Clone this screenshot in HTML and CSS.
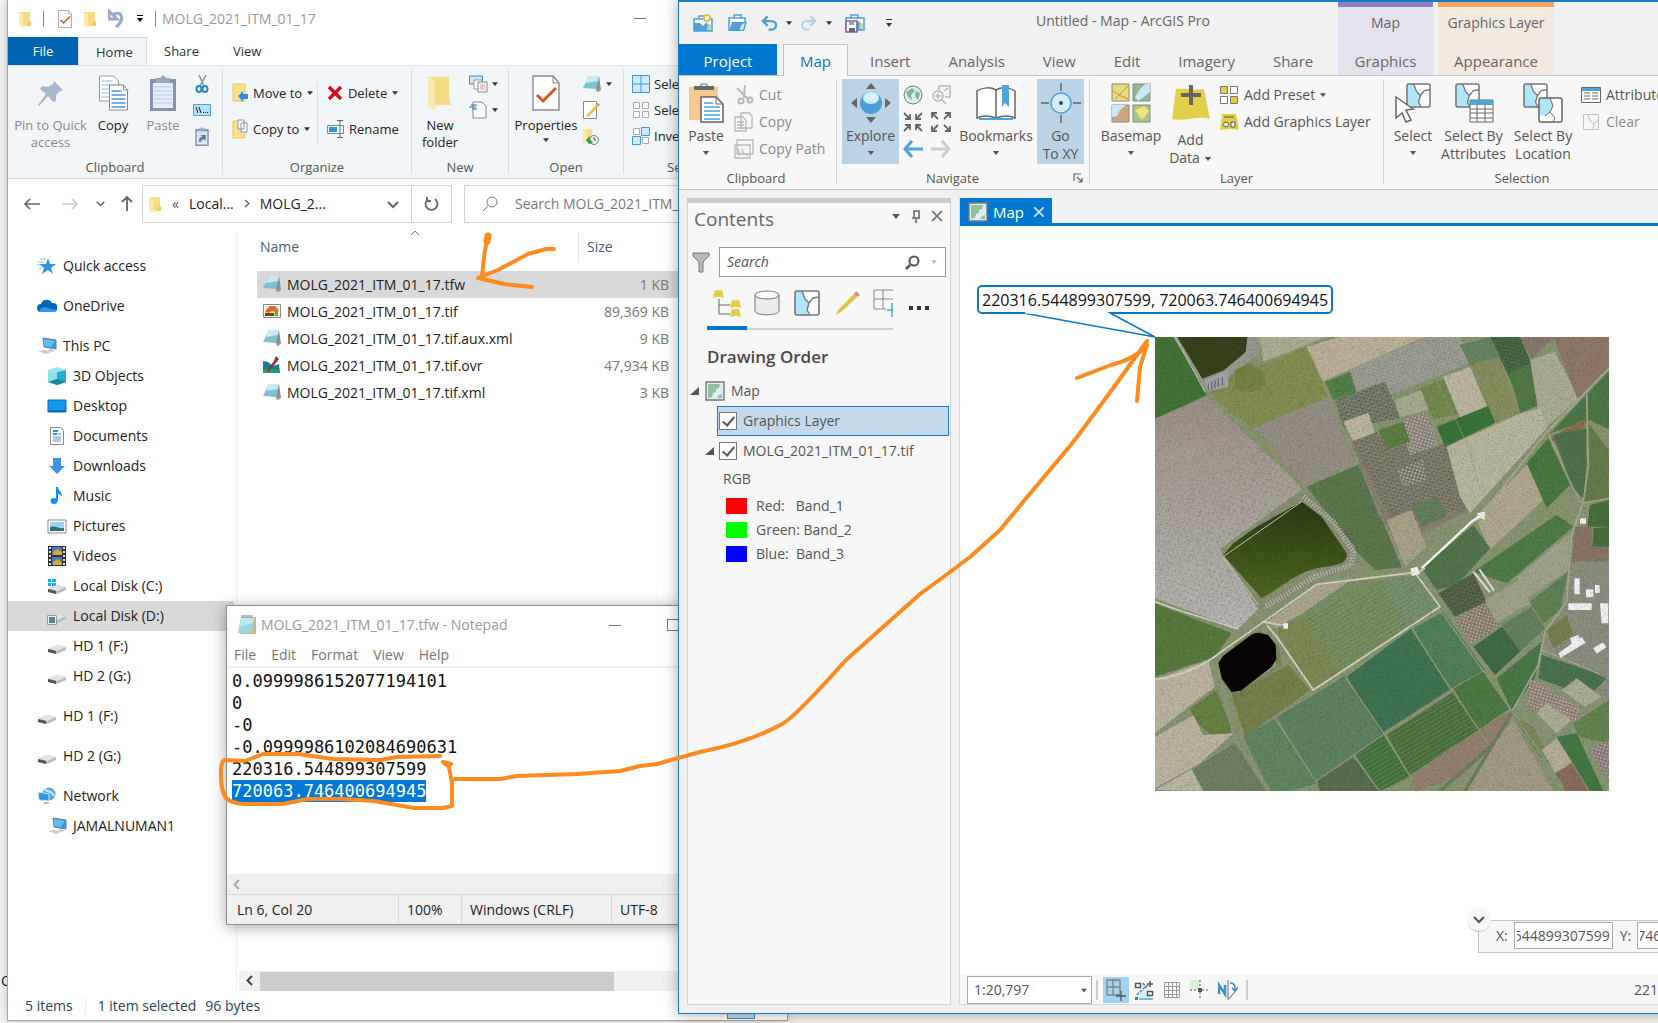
FILE: index.html
```
<!DOCTYPE html>
<html lang="en">
<head>
    <meta charset="UTF-8">
    <meta name="viewport" content="width=device-width, initial-scale=1.0">
    <title>World file coordinates</title>
    <link rel="stylesheet" href="styles.css">
</head>
<body>
    <!-- shared icons -->
    <svg class="defs" width="0" height="0">
        <symbol id="folder" viewBox="0 0 14 18"><path d="M1 2h11v13l-6 1H1z" fill="#f7dc84"/><path d="M10 11h3v5h-5z" fill="#f3cf68"/><path d="M1 2l4 2v14l-4-2z" fill="#fbe9ae"/></symbol>
        <symbol id="caret" viewBox="0 0 8 5"><path d="M0 0h8L4 5z" fill="currentColor"/></symbol>
        <symbol id="check-doc" viewBox="0 0 28 36"><path d="M1 1h20l6 7v27H1z" fill="#fff" stroke="#8a8a8a" stroke-width="1.4"/><path d="M21 1v7h6" fill="none" stroke="#8a8a8a"/><path d="M5 20l6 6L24 13" fill="none" stroke="#e0531f" stroke-width="3"/></symbol>
        <symbol id="note" viewBox="0 0 20 18"><path d="M7 1h10l-2 13-14-1z" fill="#7fc0d3"/><path d="M7 1h10l-1 5L4 8z" fill="#c9eaf1"/><path d="M17 1l2 14-3 2-2-3z" fill="#8b9494"/><path d="M14 15l4 0-3 2z" fill="#b79b62"/></symbol>
        <symbol id="pc" viewBox="0 0 20 18"><path d="M6 1l13 2v9L7 10z" fill="#2a9be8" stroke="#6d7f8c"/><path d="M7 2l11 2-4 6-7-1z" fill="#62bdf6"/><path d="M12 12l5 1-1 2-5-1zM1 14l6-1 7 2-5 2z" fill="#c4c9cd"/></symbol>
        <symbol id="drive" viewBox="0 0 20 12"><path d="M1 6l9-4 9 2v3l-9 4-9-2z" fill="#b9bbbd"/><path d="M1 5l9-3 9 2-9 4z" fill="#e2e3e4"/><path d="M1 6l8 2v3l-8-2z" fill="#525456"/></symbol>
        <symbol id="map-icon" viewBox="0 0 20 20"><path d="M1 1h18v18H1z" fill="#dcefF4" stroke="#777" stroke-width="1.4"/><path d="M3 3h12l-1 4-3 1 0 3-3 1-1 4-4 1zM14 14l3-1v4h-5z" fill="#94bf9c"/></symbol>
        <symbol id="poly" viewBox="0 0 26 26"><rect x="1" y="1" width="24" height="24" rx="2" fill="#fff"/><path d="M1 1h7l3 9 4 3-2 7 3 5H1z" fill="#b0e7f8"/><path d="M8 1l3 8 4 4-2 7 3 5M15 13l4-5 6-1" fill="none" stroke="#767676" stroke-width="1.4"/><rect x="1" y="1" width="24" height="24" rx="2" fill="none" stroke="#767676" stroke-width="1.6"/></symbol>
        <symbol id="globe-case" viewBox="0 0 20 18"><path d="M1 5h18v12H1z" fill="#fff" stroke="#4f9fd6" stroke-width="1.5"/><path d="M6 5V2h7v3" fill="none" stroke="#4f9fd6" stroke-width="1.5"/><path d="M1 17V9h6l3 3 4-4 3 9z" fill="#4f9fd6"/><path d="M15 9l3 2v5h-4z" fill="#b9dba9"/></symbol>
        <symbol id="open-case" viewBox="0 0 20 18"><path d="M1 17V4h16v4" fill="#fff" stroke="#4f9fd6" stroke-width="1.5"/><path d="M6 4V1h7v3" fill="none" stroke="#4f9fd6" stroke-width="1.5"/><path d="M4 8h15l-3 9H1z" fill="#4f9fd6"/><path d="M12 16c0-4 2-6 5-7l-2 7z" fill="#d5ebc9"/></symbol>
        <symbol id="undo" viewBox="0 0 18 16"><path d="M7 1L2 6l5 5M2 6h9c7 0 6 9 0 9H8" fill="none" stroke="currentColor" stroke-width="2.4"/></symbol>
        <symbol id="chev" viewBox="0 0 12 8"><path d="M1 1l5 5 5-5" fill="none" stroke="currentColor" stroke-width="2"/></symbol>
        <symbol id="pages" viewBox="0 0 30 36"><path d="M1 1h14l5 5v20H1z" fill="#fff" stroke="#999"/><path d="M3 6h11M3 10h14M3 14h14M3 18h14M3 22h14" stroke="#8bb8f0"/><path d="M11 10h14l4 5v20H11z" fill="#fff" stroke="#888"/><path d="M25 10v5h5" fill="none" stroke="#888"/><path d="M13 16h10M13 20h14M13 24h14M13 28h14M13 32h14" stroke="#4b91ee" stroke-width="1.3"/></symbol>
        <symbol id="clip" viewBox="0 0 26 36"><path d="M0 4h26v32H0z" fill="#8393b0"/><path d="M3 8h20v25H3z" fill="#e5ecf7"/><path d="M4 12h18M4 16h18M4 20h18M4 24h18M4 28h18" stroke="#b8c9e2"/><path d="M6 3h4l3-3 3 3h4v5H6z" fill="#9aa7b8"/></symbol>
        <symbol id="layer" viewBox="0 0 12 8"><path d="M2 0h8l2 8-6-1-6 1z" fill="#e2cd45"/></symbol>
    </svg>

    <main class="desktop">
        <p class="behind">C</p>

        <!-- file explorer -->
        <section class="explorer">
            <header class="ex-title">
                <svg width="14" height="18"><use href="#folder"/></svg>
                <span class="bar"></span>
                <svg width="14" height="18"><use href="#check-doc"/></svg>
                <svg width="14" height="18"><use href="#folder"/></svg>
                <svg width="17" height="20" viewBox="0 0 17 20"><path d="M1 2v8h8zM5 6c8-6 13 4 3 12" fill="none" stroke="#9aa9c7" stroke-width="3"/></svg>
                <svg width="8" height="8" viewBox="0 0 8 8"><path d="M1 0h6v1H1zM1 3h6L4 7z"/></svg>
                <span class="bar"></span>
                <h1>MOLG_2021_ITM_01_17</h1>
                <button class="min" aria-label="Minimize"></button>
            </header>
            <nav class="ex-tabs">
                <button class="file">File</button>
                <button class="active">Home</button>
                <button>Share</button>
                <button>View</button>
            </nav>
            <div class="ex-ribbon">
                <div class="group g-clip">
                    <div class="tools">
                        <button class="big dim pin"><svg width="27" height="36" viewBox="0 0 27 36"><path d="M17 6l9 9-3 1-4 4v6l-3 1-5-6-9 10-1-1 8-11-6-5 2-3 6 1 5-3z" fill="#a9b7cb"/></svg>Pin to Quick<br>access</button>
                        <button class="big copy"><svg width="31" height="36"><use href="#pages"/></svg>Copy</button>
                        <button class="big dim paste"><svg width="26" height="36"><use href="#clip"/></svg>Paste</button>
                        <div class="stack">
                            <button aria-label="Cut"><svg width="18" height="18" viewBox="0 0 18 18"><path d="M6 0l5 11M13 0L7 11" stroke="#8d949b" stroke-width="1.500"/><ellipse cx="6" cy="14" rx="2.500" ry="3" fill="none" stroke="#2089c9" stroke-width="2"/><ellipse cx="12" cy="14" rx="2.500" ry="3" fill="none" stroke="#2089c9" stroke-width="2"/></svg></button>
                            <button aria-label="Copy path"><svg width="18" height="12" viewBox="0 0 18 12"><path d="M.5.5h17v11H.5z" fill="#b5e1fb" stroke="#5a9fd4"/><path d="M3 3l2 6M6 3l2 6M10 8.500h1M12 8.500h1M14 8.500h1" stroke="#123"/></svg></button>
                            <button aria-label="Paste shortcut"><svg width="14" height="19" viewBox="0 0 26 36"><use href="#clip"/><path d="M7 28c0-7 3-9 7-10l-4-3h10v11l-3-3c-4 0-5 2-6 5z" fill="#5b76a5"/></svg></button>
                        </div>
                    </div>
                    <h2>Clipboard</h2>
                </div>
                <div class="group g-org">
                    <div class="tools">
                        <div class="rows">
                            <button><svg width="16" height="20" viewBox="0 0 16 20"><path d="M1 1h12v17H1z" fill="#fce08a" stroke="#e8c660"/><path d="M6 13l5-5v3h5v5h-5v3z" fill="#2c8fdd"/></svg>Move to<svg class="car" width="6" height="4"><use href="#caret"/></svg></button>
                            <button><svg width="16" height="20" viewBox="0 0 16 20"><path d="M1 2h12v17H1z" fill="#fce08a" stroke="#e8c660"/><path d="M6 1h6v9H6zM9 4h6v9H9z" fill="#fff" stroke="#8895aa"/></svg>Copy to<svg class="car" width="6" height="4"><use href="#caret"/></svg></button>
                        </div>
                        <div class="rows split">
                            <button><svg width="16" height="16" viewBox="0 0 16 16"><path d="M2 2l12 12M14 2L2 14" stroke="#cf1020" stroke-width="3.500"/></svg>Delete<svg class="car" width="6" height="4"><use href="#caret"/></svg></button>
                            <button><svg width="17" height="18" viewBox="0 0 17 18"><path d="M.5 5.500h16v8H.5z" fill="#fff" stroke="#7b8b9a"/><path d="M2 7h8v5H2z" fill="#2f91e4"/><path d="M10 .5h6M13 1v16M10 17.500h6" stroke="#666"/></svg>Rename</button>
                        </div>
                    </div>
                    <h2>Organize</h2>
                </div>
                <div class="group g-new">
                    <div class="tools">
                        <button class="big"><svg width="26" height="36"><path d="M1 2h21v19l2 9H8z" fill="#f6dc85"/><path d="M1 2l7 4v30l-7-5z" fill="#fbe9ad"/></svg>New<br>folder</button>
                        <div class="stack wide">
                            <button aria-label="New item"><svg width="19" height="18" viewBox="0 0 19 18"><path d="M.5 1h13v8H.5z" fill="#cfe4f5" stroke="#4d88b8"/><path d="M5 5h8v9H5z" fill="#fff" stroke="#999"/><path d="M9 7h9v10H9z" fill="#f7f7f7" stroke="#888"/><path d="M11 10h5M11 12h5M11 14h5" stroke="#d2a2a2"/></svg><svg class="car" width="6" height="4"><use href="#caret"/></svg></button>
                            <button aria-label="Easy access"><svg width="19" height="18" viewBox="0 0 19 18"><path d="M4 1h9l4 4v12H4z" fill="#fff" stroke="#888"/><path d="M2 4h6M0 6h7M3 8h5" stroke="#2d6db3"/></svg><svg class="car" width="6" height="4"><use href="#caret"/></svg></button>
                        </div>
                    </div>
                    <h2>New</h2>
                </div>
                <div class="group g-open">
                    <div class="tools">
                        <button class="big"><svg width="28" height="36"><use href="#check-doc"/></svg>Properties<svg class="car" width="6" height="4"><use href="#caret"/></svg></button>
                        <div class="stack wide">
                            <button aria-label="Open"><svg width="20" height="18"><use href="#note"/></svg><svg class="car" width="6" height="4"><use href="#caret"/></svg></button>
                            <button aria-label="Edit"><svg width="18" height="18" viewBox="0 0 18 18"><path d="M1.500.5h13v17h-13z" fill="#fff" stroke="#888"/><path d="M5 14L15 3l2 2L7 15l-3 1z" fill="#efb73e"/><path d="M15 3l1-1 2 2-1 1z" fill="#d56c6c"/></svg></button>
                            <button aria-label="History"><svg width="18" height="18" viewBox="0 0 18 18"><use href="#folder" width="12" height="17"/><circle cx="12" cy="13" r="4.500" fill="#e9eef0" stroke="#7d868c"/><path d="M12 10v3h2" fill="none" stroke="#555"/><path d="M4 13l4-4v3l3 4-4 1z" fill="#2ea043"/></svg></button>
                        </div>
                    </div>
                    <h2>Open</h2>
                </div>
                <div class="group g-sel">
                    <div class="tools">
                        <div class="stack lines">
                            <button><svg width="18" height="18" viewBox="0 0 18 18" fill="#cdeaff" stroke="#3c9be0"><path d="M.5.5h17v17H.5zM9 0v18M0 9h18"/></svg>Select all</button>
                            <button><svg width="18" height="18" viewBox="0 0 18 18" fill="#fff" stroke="#aaa"><path d="M1.500 1.500h6v6h-6zM10.500 1.500h6v6h-6zM1.500 10.500h6v6h-6zM10.500 10.500h6v6h-6z"/></svg>Select none</button>
                            <button><svg width="18" height="18" viewBox="0 0 18 18"><path d="M1.500 1.500h6v6h-6zM10.500 10.500h6v6h-6z" fill="#fff" stroke="#aaa"/><path d="M9.500.5h8v8h-8zM.5 9.500h8v8h-8z" fill="#cdeaff" stroke="#3c9be0"/></svg>Invert selection</button>
                        </div>
                    </div>
                    <h2>Select</h2>
                </div>
            </div>
            <div class="ex-nav">
                <button aria-label="Back"><svg width="16" height="12" viewBox="0 0 16 12"><path d="M6 1L1 6l5 5M1 6h15" fill="none" stroke="#666" stroke-width="1.600"/></svg></button>
                <button aria-label="Forward"><svg width="16" height="12" viewBox="0 0 16 12"><path d="M10 1l5 5-5 5M15 6H0" fill="none" stroke="#ccc" stroke-width="1.600"/></svg></button>
                <button class="recent" aria-label="Recent"><svg width="9" height="6"><use href="#chev"/></svg></button>
                <button class="up" aria-label="Up"><svg width="12" height="15" viewBox="0 0 12 15"><path d="M1 6l5-5 5 5M6 1v14" fill="none" stroke="#666" stroke-width="1.800"/></svg></button>
                <div class="address">
                    <svg width="14" height="18"><use href="#folder"/></svg>
                    <span class="sep">«</span>
                    <a href="#">Local...</a>
                    <svg class="sep" width="6" height="9" viewBox="0 0 6 9"><path d="M1 1l4 3.500-4 3.500" fill="none" stroke="#666" stroke-width="1.500"/></svg>
                    <a href="#">MOLG_2...</a>
                    <button class="drop" aria-label="Previous locations"><svg width="12" height="8"><use href="#chev"/></svg></button>
                    <button class="refresh" aria-label="Refresh"><svg width="15" height="16" viewBox="0 0 15 16"><path d="M4 3a6 6 0 1 0 7 0M3 1v4h4" fill="none" stroke="#666" stroke-width="1.800"/></svg></button>
                </div>
                <label class="ex-search">
                    <svg width="16" height="16" viewBox="0 0 16 16"><circle cx="10" cy="6" r="5" fill="none" stroke="#777"/><path d="M6 10l-5 5" stroke="#777"/></svg>
                    <input type="text" placeholder="Search MOLG_2021_ITM_01_17">
                </label>
            </div>
            <div class="ex-body">
                <ul class="sidebar">
                    <li class="top"><a href="#"><svg width="20" height="18" viewBox="0 0 20 18"><path d="M11 1l2 6h6l-5 4 2 6-5-4-6 4 2-6-5-4h7z" fill="#2b95e0"/><path d="M3 2h6M1 5h6M0 8h4M2 11h3" stroke="#8cc7f2"/></svg>Quick access</a></li>
                    <li class="top"><a href="#"><svg width="20" height="18" viewBox="0 0 20 18"><path d="M4 15a4 4 0 0 1 0-8 6 6 0 0 1 11-1 4 4 0 0 1 2 9z" fill="#0a64b8"/><path d="M3 15c-2-3 4-6 8-4l8 2c0 1-1 2-2 2z" fill="#2d9ae8"/></svg>OneDrive</a></li>
                    <li class="top"><a href="#"><svg width="20" height="18"><use href="#pc"/></svg>This PC</a></li>
                    <li><a href="#"><svg width="20" height="18" viewBox="0 0 20 18"><path d="M1 3l9-3 9 3-9 2z" fill="#9be6ee"/><path d="M1 3l9 2v13l-9-3z" fill="#8fe0e6"/><path d="M19 3l-9 2v13l9-3z" fill="#1fb0cb"/><path d="M10 12l9 3-9 3-9-3z" fill="#12899f"/></svg>3D Objects</a></li>
                    <li><a href="#"><svg width="20" height="18" viewBox="0 0 20 18"><path d="M1 3h18v12H1z" fill="#1497f0" stroke="#1466a8"/><path d="M2 14h16" stroke="#0a4f88"/></svg>Desktop</a></li>
                    <li><a href="#"><svg width="20" height="18" viewBox="0 0 20 18"><path d="M3.500.5h10l3 3v14h-13z" fill="#fff" stroke="#8a8a8a"/><path d="M6 4h5M6 7h4" stroke="#2b95d8" stroke-width="2"/><path d="M6 10h8M6 12h8M6 14h8M11 7h3" stroke="#5b95c4"/></svg>Documents</a></li>
                    <li><a href="#"><svg width="20" height="18" viewBox="0 0 20 18"><path d="M6 1h8v8h4l-8 8-8-8h4z" fill="#3f93de"/></svg>Downloads</a></li>
                    <li><a href="#"><svg width="20" height="18" viewBox="0 0 20 18"><ellipse cx="7" cy="14" rx="3.500" ry="3" fill="#1193ea"/><path d="M9 0h2c0 4 5 5 4 10-1-3-3-3-4-3v7H9z" fill="#1193ea"/></svg>Music</a></li>
                    <li><a href="#"><svg width="20" height="18" viewBox="0 0 20 18"><path d="M1 3h18v13H1z" fill="#fff" stroke="#8a8a8a"/><path d="M3 5h14v9H3z" fill="#9bd0f5"/><path d="M3 10c4-2 9 2 14 1v3H3z" fill="#2f6f73"/></svg>Pictures</a></li>
                    <li><a href="#"><svg width="20" height="20" viewBox="0 0 20 20"><path d="M1 0h18v20H1z" fill="#37302f"/><path d="M5 1h10v8H5zM5 11h10v8H5z" fill="#4a78d0"/><path d="M6 6l4-3 5 3v3H6zM6 16l5-3 4 4v2H6z" fill="#d8a92b"/><path d="M3 1v18M17 1v18" stroke="#ddd" stroke-width="2" stroke-dasharray="2 2"/></svg>Videos</a></li>
                    <li><a href="#"><svg width="20" height="18" viewBox="0 0 20 18"><path d="M1 2h3v3H1zM5 2h4v3H5zM1 6h3v3H1zM5 6h4v3H5z" fill="#16a9e0"/><use href="#drive" y="6" width="20" height="12"/></svg>Local Disk (C:)</a></li>
                    <li class="selected"><a href="#"><svg width="20" height="18" viewBox="0 0 20 18"><use href="#drive" y="5" width="20" height="12"/><path d="M.5 8.500h9v9h-9z" fill="#fff" stroke="#999"/><path d="M2 10h6v6H2z" fill="#4b8b91"/></svg>Local Disk (D:)</a></li>
                    <li><a href="#"><svg width="20" height="18" viewBox="0 0 20 18"><use href="#drive" y="6" width="20" height="12"/></svg>HD 1 (F:)</a></li>
                    <li><a href="#"><svg width="20" height="18" viewBox="0 0 20 18"><use href="#drive" y="6" width="20" height="12"/></svg>HD 2 (G:)</a></li>
                    <li class="top"><a href="#"><svg width="20" height="18" viewBox="0 0 20 18"><use href="#drive" y="6" width="20" height="12"/></svg>HD 1 (F:)</a></li>
                    <li class="top"><a href="#"><svg width="20" height="18" viewBox="0 0 20 18"><use href="#drive" y="6" width="20" height="12"/></svg>HD 2 (G:)</a></li>
                    <li class="top"><a href="#"><svg width="20" height="18" viewBox="0 0 20 18"><circle cx="12" cy="7" r="6.500" fill="#5ba7d8"/><path d="M8 3c4 2 7 1 9 6" fill="none" stroke="#cbe7f7" stroke-width="2"/><path d="M1 5l11 2v7L2 13z" fill="#2a9be8" stroke="#d6e6f0"/><path d="M7 15h5v2H6z" fill="#b7bec4"/></svg>Network</a></li>
                    <li><a href="#"><svg width="20" height="18"><use href="#pc"/></svg>JAMALNUMAN1</a></li>
                </ul>
                <div class="files">
                    <table>
                        <thead>
                            <tr><th class="name"><div>Name<svg class="sort" width="10" height="6" viewBox="0 0 10 6"><path d="M1 5l4-4 4 4" fill="none" stroke="#777"/></svg></div></th><th class="size"><div>Size</div></th></tr>
                        </thead>
                        <tbody>
                            <tr class="selected"><td><svg width="20" height="18"><use href="#note"/></svg>MOLG_2021_ITM_01_17.tfw</td><td>1 KB</td></tr>
                            <tr><td><svg width="20" height="18" viewBox="0 0 20 18"><path d="M1.500 2.500h17v13h-17z" fill="#fff" stroke="#8a8a8a"/><path d="M3 4h14v10H3z" fill="#f6e3c4"/><path d="M3 9l5-5h5l4 5-3 1-4-1-4 2z" fill="#e5642a"/><path d="M3 11h9v3H3z" fill="#7b3e1d"/><path d="M12 8h4v6h-3z" fill="#7da43c"/></svg>MOLG_2021_ITM_01_17.tif</td><td>89,369 KB</td></tr>
                            <tr><td><svg width="20" height="18"><use href="#note"/></svg>MOLG_2021_ITM_01_17.tif.aux.xml</td><td>9 KB</td></tr>
                            <tr><td><svg width="20" height="18" viewBox="0 0 20 18"><path d="M1 5l5 1 5 4 6-2 1 9H1z" fill="#177d92"/><path d="M1 13h16v4H1z" fill="#2a9a78"/><path d="M14 0l3 3-4 5-8 9 1-4 6-8z" fill="#9c2a34"/></svg>MOLG_2021_ITM_01_17.tif.ovr</td><td>47,934 KB</td></tr>
                            <tr><td><svg width="20" height="18"><use href="#note"/></svg>MOLG_2021_ITM_01_17.tif.xml</td><td>3 KB</td></tr>
                        </tbody>
                    </table>
                    <div class="hscroll"><button aria-label="Scroll left"><svg width="7" height="11" viewBox="0 0 7 11"><path d="M6 1L1.500 5.500 6 10" fill="none" stroke="#444" stroke-width="2"/></svg></button><span class="thumb"></span></div>
                </div>
            </div>
            <footer class="ex-status"><span>5 items</span><span>1 item selected</span><span>96 bytes</span><i class="view-toggle"></i></footer>
        </section>

        <!-- notepad -->
        <section class="notepad">
            <header class="np-title">
                <svg width="20" height="20" viewBox="0 0 20 20"><path d="M4 2h15v17H3z" fill="#c8b98d"/><path d="M4 2h13l-2 16H1z" fill="#9bd5e2"/><path d="M4 2h13l-1 6-13 4z" fill="#c0e7ee"/><path d="M5 0v3M7 0v3M9 0v3M11 0v3M13 0v3M15 0v3" stroke="#777"/></svg>
                <h1>MOLG_2021_ITM_01_17.tfw - Notepad</h1>
                <button class="min" aria-label="Minimize"></button>
                <button class="max" aria-label="Maximize"></button>
            </header>
            <nav class="np-menu"><button>File</button><button>Edit</button><button>Format</button><button>View</button><button>Help</button></nav>
            <textarea id="note-text" aria-label="Text" spellcheck="false">0.0999986152077194101
0
-0
-0.0999986102084690631
220316.544899307599
720063.746400694945</textarea>
            <div class="np-scroll"><svg width="7" height="11" viewBox="0 0 7 11"><path d="M6 1L1.500 5.500 6 10" fill="none" stroke="#aaa" stroke-width="2"/></svg></div>
            <footer class="np-status"><span class="pos">Ln 6, Col 20</span><span class="zoom">100%</span><span class="eol">Windows (CRLF)</span><span>UTF-8</span></footer>
        </section>

        <!-- ArcGIS Pro -->
        <section class="pro">
            <header class="pro-head">
                <div class="pro-left">
                    <div class="pro-title">
                        <svg width="20" height="18" viewBox="0 0 20 18"><use href="#globe-case" width="20" height="18"/><circle cx="14" cy="4" r="3" fill="#fff" stroke="#d8c53c" stroke-width="2"/></svg>
                        <svg class="open" width="20" height="18"><use href="#open-case"/></svg>
                        <svg class="undo" width="17" height="16"><use href="#undo"/></svg>
                        <svg class="car" width="6" height="4"><use href="#caret"/></svg>
                        <svg class="redo" width="17" height="16"><use href="#undo"/></svg>
                        <svg class="car" width="6" height="4"><use href="#caret"/></svg>
                        <svg class="save" width="20" height="20" viewBox="0 0 20 20"><use href="#globe-case" width="20" height="18"/><path d="M1 8h11v11H1z" fill="#fff" stroke="#7a62a8" stroke-width="1.600"/><path d="M4 8h5v4H4z" fill="#a696c8"/><path d="M4 15h6v4H4z" fill="#666"/></svg>
                        <svg class="more" width="8" height="8" viewBox="0 0 8 8"><path d="M1 0h6v1H1zM1 4h6L4 8z" fill="#333"/></svg>
                        <h1>Untitled - Map - ArcGIS Pro</h1>
                    </div>
                    <nav class="pro-tabs"><button class="project">Project</button><button class="active">Map</button><button>Insert</button><button>Analysis</button><button>View</button><button>Edit</button><button>Imagery</button><button>Share</button></nav>
                </div>
                <div class="context purple"><span>Map</span><button>Graphics</button></div>
                <div class="context orange"><span>Graphics Layer</span><button>Appearance</button></div>
            </header>
            <div class="pro-ribbon">
                <div class="group p-clip">
                    <div class="tools">
                        <button class="big"><svg width="36" height="40" viewBox="0 0 36 40"><path d="M1 4h29v33H1z" fill="#f7c990"/><path d="M6 3h20v4H6z" fill="#666"/><path d="M13 4V1h6v3" fill="none" stroke="#666"/><path d="M13 14h15l7 7v18H13z" fill="#fff" stroke="#666" stroke-width="1.500"/><path d="M28 14v7h7" fill="none" stroke="#666"/><path d="M16 20h9M16 24h16M16 28h16M16 32h16M16 36h16" stroke="#4f9fda" stroke-width="1.500"/></svg>Paste<svg class="car" width="8" height="4"><use href="#caret"/></svg></button>
                        <div class="rows dim">
                            <button><svg width="20" height="20" viewBox="0 0 20 20" fill="none" stroke="#b9b9b9" stroke-width="2"><path d="M11 0l-1 13M3 3l12 12"/><circle cx="7" cy="16" r="2.500"/><circle cx="16" cy="15" r="2.500"/></svg>Cut</button>
                            <button><svg width="20" height="20" viewBox="0 0 20 20" fill="#f7f7f7" stroke="#b9b9b9" stroke-width="1.300"><path d="M7 1h8l3 3v12H7zM1 5h8l3 3v11H1z"/><path d="M3 10h7M3 13h7M3 16h7"/></svg>Copy</button>
                            <button><svg width="20" height="20" viewBox="0 0 20 20" fill="#f7f7f7" stroke="#b9b9b9" stroke-width="1.300"><path d="M3 1h16v14H3zM1 6h15v13H1z"/><path d="M4 10l2 6M8 10l2 6M12 16h2"/></svg>Copy Path</button>
                        </div>
                    </div>
                    <h2>Clipboard</h2>
                </div>
                <div class="group p-nav">
                    <div class="tools">
                        <button class="big on explore"><svg width="40" height="40" viewBox="0 0 40 40"><path d="M20 0l5 6H15zM20 40l5-6H15zM0 20l6-5v10zM40 20l-6-5v10z" fill="#666"/><circle cx="20" cy="20" r="11" fill="#4a9fdb"/><ellipse cx="20" cy="15" rx="8" ry="6" fill="#d5f1fd"/></svg>Explore<svg class="car" width="8" height="4"><use href="#caret"/></svg></button>
                        <div class="nav-grid">
                            <button aria-label="Full extent"><svg width="20" height="20" viewBox="0 0 20 20"><circle cx="10" cy="10" r="9" fill="#d8eef6" stroke="#777"/><path d="M3 7l6-4 3 3-4 4 1 5-4-3zM13 6l4 2-2 7-3-4z" fill="#86b68e"/></svg></button>
                            <button aria-label="Zoom to selection"><svg width="20" height="20" viewBox="0 0 20 20" fill="none" stroke="#b9b9b9" stroke-width="1.500"><path d="M8 5V1h11v11h-5"/><circle cx="7" cy="11" r="5"/><path d="M7 8v6M4 11h6M11 15l4 4M13 6l4-3"/></svg></button>
                            <button aria-label="Fixed zoom in"><svg width="20" height="20" viewBox="0 0 20 20" fill="none" stroke="#666" stroke-width="1.800"><path d="M1 1l6 6M7 2v5H2M19 1l-6 6M13 2v5h5M1 19l6-6M7 18v-5H2M19 19l-6-6M13 18v-5h5"/></svg></button>
                            <button aria-label="Fixed zoom out"><svg width="20" height="20" viewBox="0 0 20 20" fill="none" stroke="#666" stroke-width="1.800"><path d="M7 7L1 1M1 6V1h5M13 7l6-6M19 6V1h-5M7 13l-6 6M1 14v5h5M13 13l6 6M19 14v5h-5"/></svg></button>
                            <button aria-label="Previous extent"><svg width="20" height="18" viewBox="0 0 20 18"><path d="M9 1L2 9l7 8M2 9h18" fill="none" stroke="#4fa3db" stroke-width="3"/></svg></button>
                            <button aria-label="Next extent"><svg width="20" height="18" viewBox="0 0 20 18"><path d="M11 1l7 8-7 8M18 9H0" fill="none" stroke="#ccc" stroke-width="3"/></svg></button>
                        </div>
                        <button class="big books"><svg width="40" height="40" viewBox="0 0 40 40"><path d="M1 8v27c6-3 14-2 19 0 5-2 13-3 19 0V8c-6-4-14-4-19-1C15 4 7 4 1 8z" fill="#fff" stroke="#666" stroke-width="1.500"/><path d="M20 7v28" stroke="#666" stroke-width="1.500"/><path d="M26 2h7v22l-4-4-3 4z" fill="#4fa3db"/><path d="M3 36h34" stroke="#4fa3db" stroke-width="2"/></svg>Bookmarks<svg class="car" width="8" height="4"><use href="#caret"/></svg></button>
                        <button class="big on goto"><svg width="40" height="40" viewBox="0 0 40 40"><path d="M20 0v8M20 32v8M0 20h8M32 20h8" stroke="#666" stroke-width="1.500"/><circle cx="20" cy="20" r="10" fill="#d5eefc" stroke="#4fa3db" stroke-width="1.500"/><circle cx="20" cy="20" r="2" fill="#444"/></svg>Go<br>To XY</button>
                    </div>
                    <h2>Navigate<svg class="launcher" width="10" height="10" viewBox="0 0 10 10" fill="none" stroke="#666" stroke-width="1.200"><path d="M1 8V1h7M4 4l5 5M9 5v4H5"/></svg></h2>
                </div>
                <div class="group p-layer">
                    <div class="tools">
                        <button class="big base"><svg width="40" height="40" viewBox="0 0 40 40" stroke="#888"><path d="M1 1h17v17H1z" fill="#eadb7d"/><path d="M22 1h17v17H22z" fill="#8fb693"/><path d="M1 22h17v17H1z" fill="#cda680"/><path d="M22 22h17v17H22z" fill="#a9c67e"/><path d="M39 1v8l-5 4-7 5-3-4 5-8 5-5zM1 22h14l-6 5-3 6-5 1z" fill="#cbe8f6" stroke="none"/><path d="M24 27l9-4 5 5-7 9z" fill="#f3e27f" stroke="none"/><path d="M2 8l6 4 9-9M4 16l4-4 9 4" fill="none" stroke="#b99a3d"/></svg>Basemap<svg class="car" width="8" height="4"><use href="#caret"/></svg></button>
                        <button class="big data"><svg width="40" height="40" viewBox="0 0 40 40"><path d="M5 6c9-2 19 2 28 0l6 30c-12-4-25 3-38 0z" fill="#e2cf48"/><path d="M20 2v20M10 12h20" stroke="#666" stroke-width="4"/></svg>Add<br>Data<svg class="car side" width="8" height="4"><use href="#caret"/></svg></button>
                        <div class="rows">
                            <button><svg width="20" height="20" viewBox="0 0 20 20" fill="#fff" stroke="#777"><path d="M11.500 1.500h7v7h-7zM1.500 11.500h7v7h-7z"/><path d="M1.500 1.500h7v7h-7zM11.500 11.500h7v7h-7z" fill="#e2cf48"/></svg>Add Preset<svg class="car" width="6" height="4"><use href="#caret"/></svg></button>
                            <button><svg width="20" height="20" viewBox="0 0 20 20"><path d="M3 2h14l3 16-9-1-10 1z" fill="#e2cf48"/><path d="M5 5h10M12 10h4v5h-4z" fill="#fff" stroke="#555"/><circle cx="7" cy="12.500" r="2.500" fill="#fff" stroke="#555"/></svg>Add Graphics Layer</button>
                        </div>
                    </div>
                    <h2>Layer</h2>
                </div>
                <div class="group p-sel">
                    <div class="tools">
                        <button class="big sel"><svg width="40" height="40" viewBox="0 0 40 40"><use href="#poly" x="13" width="25" height="25"/><path d="M3 14l17 12-7 1 5 10-5 2-4-9-6 5z" fill="#fff" stroke="#666" stroke-width="1.500"/></svg>Select<svg class="car" width="8" height="4"><use href="#caret"/></svg></button>
                        <button class="big attr"><svg width="40" height="40" viewBox="0 0 40 40"><use href="#poly" x="1" width="25" height="25"/><path d="M16 17h23v22H16z" fill="#fff" stroke="#666"/><path d="M16 17h23v5H16z" fill="#4fa3db"/><path d="M16 26h23M16 30h23M16 35h23M23 22v17M31 22v17" stroke="#666"/></svg>Select By<br>Attributes</button>
                        <button class="big loc"><svg width="40" height="40" viewBox="0 0 40 40"><use href="#poly" x="0" width="25" height="25"/><rect x="16" y="15" width="23" height="24" rx="2" fill="#fff"/><path d="M16 15h11l3 8-3 6-5 4-6-1z" fill="#b0e7f8"/><path d="M27 15l3 8-3 6-5 4M27 29l5 6-2 4" fill="none" stroke="#666"/><rect x="16" y="15" width="23" height="24" rx="2" fill="none" stroke="#666" stroke-width="1.500"/></svg>Select By<br>Location</button>
                        <div class="rows">
                            <button><svg width="20" height="20" viewBox="0 0 20 20"><path d="M.5 2.500h19v15H.5z" fill="#fff" stroke="#666"/><path d="M1 3h18v3H1z" fill="#4fa3db"/><path d="M3 8h6M3 11h6M3 14h6M11 8h6M11 11h6M11 14h6" stroke="#666"/></svg>Attributes</button>
                            <button class="dim"><svg width="20" height="20" viewBox="0 0 20 20" fill="#f7f7f7" stroke="#c2c2c2"><path d="M2.500 2.500h15v15h-15zM7 3l2 6 4 3-1 5M13 12l5-5"/></svg>Clear</button>
                        </div>
                    </div>
                    <h2>Selection</h2>
                </div>
            </div>
            <div class="pro-body">
                <aside class="contents">
                    <header><h2>Contents</h2><svg width="10" height="5"><use href="#caret"/></svg><svg width="10" height="13" viewBox="0 0 10 13"><path d="M3 1h5v7H3zM1 8h8M5 8v5" fill="none" stroke="#666" stroke-width="1.500"/></svg><button aria-label="Close"><svg width="12" height="12" viewBox="0 0 12 12"><path d="M1 1l10 10M11 1L1 11" stroke="#666" stroke-width="1.600"/></svg></button></header>
                    <div class="find">
                        <svg width="18" height="21" viewBox="0 0 18 21"><path d="M1 1h16v3l-6 6v10H7V10L1 4z" fill="#bbb" stroke="#777"/></svg>
                        <label><input type="text" placeholder="Search"><svg width="15" height="15" viewBox="0 0 15 15"><circle cx="9" cy="6" r="4.500" fill="none" stroke="#555" stroke-width="2"/><path d="M5 10l-4 4" stroke="#555" stroke-width="2.500"/></svg><svg class="faint" width="6" height="4"><use href="#caret"/></svg></label>
                    </div>
                    <div class="list-by">
                        <button class="active" aria-label="Drawing order"><svg width="28" height="28" viewBox="0 0 28 28"><use href="#layer" width="11" height="8" y="1"/><use href="#layer" width="11" height="8" x="17" y="11"/><use href="#layer" width="11" height="8" x="17" y="20"/><path d="M6 10v15h11M6 16h11" fill="none" stroke="#666"/></svg></button>
                        <button aria-label="Source"><svg width="26" height="26" viewBox="0 0 26 26"><path d="M1 5v16c0 5 24 5 24 0V5" fill="#ececec" stroke="#777"/><ellipse cx="13" cy="5" rx="12" ry="4" fill="#fff" stroke="#777"/></svg></button>
                        <button aria-label="Selection"><svg width="26" height="26"><use href="#poly"/></svg></button>
                        <button aria-label="Editing"><svg width="26" height="26" viewBox="0 0 26 26"><path d="M2 25l2-5L20 4l3 3L7 22z" fill="#e2c438"/><path d="M20 4l2-3 4 4-3 2z" fill="#d98b8b"/></svg></button>
                        <button class="cut" aria-label="Snapping"><svg width="20" height="28" viewBox="0 0 20 28"><path d="M20 1H1v19h12M1 10h19M10 1v19" fill="none" stroke="#888"/><path d="M14 21h6M19 14v14" stroke="#4fa3db" stroke-width="1.500"/></svg></button>
                        <span class="dots"><i></i><i></i><i></i></span>
                    </div>
                    <h3>Drawing Order</h3>
                    <ul class="tree">
                        <li class="root"><svg class="tri" width="9" height="8" viewBox="0 0 9 8"><path d="M9 0v8H0z" fill="#555"/></svg><svg width="20" height="20"><use href="#map-icon"/></svg>Map</li>
                        <li class="sub selected"><label><input type="checkbox" checked>Graphics Layer</label></li>
                        <li class="sub"><svg class="tri" width="9" height="8" viewBox="0 0 9 8"><path d="M9 0v8H0z" fill="#555"/></svg><label><input type="checkbox" checked>MOLG_2021_ITM_01_17.tif</label></li>
                        <li class="rgb">RGB</li>
                        <li class="band"><i class="red"></i>Red:&nbsp;&nbsp; Band_1</li>
                        <li class="band"><i class="green"></i>Green: Band_2</li>
                        <li class="band"><i class="blue"></i>Blue:&nbsp; Band_3</li>
                    </ul>
                </aside>
                <div class="view">
                    <div class="view-tabs"><button><svg width="20" height="20"><use href="#map-icon"/></svg>Map<svg width="10" height="10" viewBox="0 0 10 10"><path d="M0 0l10 10M10 0L0 10" stroke="#cde5f7" stroke-width="1.600"/></svg></button></div>
                    <div class="canvas">
                        <svg class="raster" viewBox="45 51 1362 1362" preserveAspectRatio="none">
                            <defs>
                                <pattern id="dark" width="16" height="14" patternUnits="userSpaceOnUse" patternTransform="rotate(-28)"><path d="M1 1h5v5H1zM9 8h4v4H9zM12 1h3v3h-3z" fill="#1d2a1d" opacity=".7"/></pattern>
                                <pattern id="light" width="14" height="14" patternUnits="userSpaceOnUse" patternTransform="rotate(-28)"><path d="M1 1h4v4H1zM8 8h4v4H8z" fill="#f4f0ea" opacity=".8"/></pattern>
                                <pattern id="rows" width="12" height="12" patternUnits="userSpaceOnUse" patternTransform="rotate(-30)"><path d="M0 5h12" stroke="#b8c49a" stroke-width="2" opacity=".35"/></pattern>
                                <pattern id="sparse" width="27" height="23" patternUnits="userSpaceOnUse" patternTransform="rotate(-20)"><path d="M2 2h4v4H2zM16 13h4v4h-4z" fill="#47413c" opacity=".35"/></pattern>
                                <linearGradient id="pond" x1="0" y1="0" x2="0" y2="1"><stop offset="0" stop-color="#2b3a14"/><stop offset="1" stop-color="#4f6a20"/></linearGradient>
                                <linearGradient id="soil" x1="0" y1="0" x2="0" y2="1"><stop offset="0" stop-color="#94877c"/><stop offset="1" stop-color="#b4b2af"/></linearGradient>
                                <filter id="grain" x="0" y="0" width="100%" height="100%"><feTurbulence type="fractalNoise" baseFrequency=".7" numOctaves="2" seed="4"/><feColorMatrix values="0 0 0 0 0  0 0 0 0 0  0 0 0 0 0  1.200 0 0 0 -.48"/></filter>
                            </defs>
                            <path d="M45 51h1362v1362H45z" fill="#7c8b64"/>
                            <!-- west side -->
                            <path d="M45 51h60l95 175-155 70z" fill="#2c6420"/>
                            <path d="M100 51h265l-5 50-160 115z" fill="#8d9285"/>
                            <path d="M360 51h200l-190 75z" fill="#a8a88c"/>
                            <path d="M380 130l120-50 65 150-230 95-130-105 80-60z" fill="#78833f"/>
                            <path d="M285 150l40-20 45 25 5 40-40 22-50-10z" fill="#66762e"/>
                            <path d="M45 296l155-65 290 275-250 180 115 180-60 60L45 835z" fill="url(#soil)"/>
                            <path d="M45 560l325-180 120 126-250 180 115 180-60 60L45 835z" fill="url(#sparse)"/>
                            <path d="M345 325l220-95 80 200-150 70z" fill="#8d857a"/>
                            <path d="M500 500l160-68 125 310-80 8-60-60z" fill="#4a6a3a"/>
                            <path d="M470 520h40l135 160v60l-120 50-160 75-120-165z" fill="#7d8663"/>
                            <path d="M45 850l230 90-50 70-180 60z" fill="#456c29"/>
                            <path d="M45 1080l160-60 20 80-60 45-120 95z" fill="#b8b09c"/>
                            <path d="M150 1165l80-55 50 130-60 10-60-50z" fill="#56752f"/>
                            <path d="M45 1250l115-65 30 60 90-5-100 90-135 75z" fill="#b8b09c"/>
                            <path d="M155 1350l130-80 95 145H190z" fill="#607253"/>
                            <path d="M45 1410l110-62 35 65z" fill="#b6b2a0"/>
                            <!-- middle strip -->
                            <path d="M370 900l160-110 195-10 105-15 70 100-380 240-105-175z" fill="#6f8556"/>
                            <path d="M380 905l150-110 95-10-130 90-85 50z" fill="#a69f82"/>
                            <path d="M495 890l230-110 80 135-210 140z" fill="#66804c"/><path d="M495 890l230-110 80 135-210 140z" fill="url(#rows)"/>
                            <path d="M725 780l115-10 60 90-95 50z" fill="#64835a"/><path d="M725 780l115-10 60 90-95 50z" fill="url(#rows)"/>
                            <path d="M410 935l80-45 105 165-80 50z" fill="#6f7f42"/>
                            <path d="M230 1030l60-60 70-40 55 45 10 60-140 95-35-40z" fill="#6b7a44"/>
                            <path d="M275 1125l170-90 65 75-195 140z" fill="#657536"/>
                            <!-- south fields -->
                            <path d="M310 1250l95-55 125 195-80 23h-60z" fill="#4d7a4c"/>
                            <path d="M410 1192l205-125 115 175-205 140z" fill="#4b7650"/>
                            <path d="M620 1070l195-145 115 185-205 130z" fill="#286641"/>
                            <path d="M820 925l90-50 125 175-105 58z" fill="#3d7545"/>
                            <path d="M740 1245l200-130 75 115-205 135z" fill="#35632a"/><path d="M740 1245l200-130 75 115-205 135z" fill="url(#rows)"/>
                            <path d="M940 1105l90-55 80 115-95 65z" fill="#396c30"/>
                            <path d="M645 1305l85-60 80 125-90 43z" fill="#2d652b"/><path d="M645 1305l85-60 80 125-90 43z" fill="url(#rows)"/>
                            <path d="M530 1385l110-75 75 103H540z" fill="#475f3a"/>
                            <path d="M810 1370l205-140 100-60-60 110-90 90-140 43z" fill="#8b7462"/>
                            <path d="M980 1413l90-160 50-50 120 210z" fill="#9c947a"/>
                            <!-- north fields -->
                            <path d="M500 80l100-29h250l-300 133z" fill="#b9ad91"/>
                            <path d="M630 150l220-99h110l35 75-260 105-90-10z" fill="#8e8f86"/><path d="M630 150l220-99h110l35 75-260 105-90-10z" fill="url(#light)" opacity=".35"/>
                            <path d="M555 185l75-28 20 60-70 22z" fill="#417434"/>
                            <path d="M585 240l150-55 45 110-170 30z" fill="#6f7a66"/><path d="M585 240l150-55 45 110-170 30z" fill="url(#dark)"/>
                            <path d="M610 305l75-27 20 60-65 25z" fill="#b9b396"/>
                            <path d="M635 365l75-30 40 55 80-30 90 15 60 200-200 100-65-90z" fill="#7d7566"/><path d="M635 365l75-30 40 55 80-30 90 15 60 200-115 5-90 60z" fill="url(#dark)" opacity=".8"/>
                            <path d="M790 300l65-25 45 100-90 30-20-60z" fill="#81776f"/><path d="M790 300l65-25 45 100-90 30-20-60zM770 450l80-30 10 60-70 20z" fill="url(#light)"/>
                            <path d="M715 330l75-25 20 60-70 25z" fill="#4a712e"/>
                            <path d="M765 240l80-30 20 60-85 22z" fill="#9ea584"/>
                            <path d="M840 205l70-28 45 105-75 15z" fill="#657e3c"/>
                            <path d="M910 170l80-30 50 118-80 35z" fill="#b9b29c"/>
                            <path d="M995 135l80-30 65 180-80 20-20-50z" fill="#7b854d"/>
                            <path d="M960 75l90-24 25 60-85 25z" fill="#557851"/>
                            <path d="M890 320l155-62 20 50-150 72z" fill="#216622"/>
                            <path d="M1050 51h90l35 80-65 45z" fill="#335f2f"/><path d="M1050 51h90l35 80-65 45z" fill="url(#dark)"/>
                            <path d="M1105 160l65-30 20 60-65 30zM1125 220l65-30 30 55-80 35z" fill="#3c6c31"/>
                            <path d="M1140 51h105l-70 65z" fill="#7b6c60"/>
                            <path d="M1170 120l75-25 70 140-110 100z" fill="#a6a58b"/>
                            <path d="M1240 51h167v90l-95 95z" fill="#86695a"/>
                            <path d="M1410 150v180l-60-30-120 40z" fill="#386b34"/>
                            <path d="M1230 355l105-60v25l-85 55z" fill="#7d5d48"/>
                            <path d="M920 380l220-100 60-15 20 60-230 255-30-50z" fill="#b5b398"/>
                            <path d="M1005 590l180-180 35 120-170 160z" fill="#aaa385"/>
                            <path d="M1160 430l65-75 65 140-70 70z" fill="#336b2c"/>
                            <path d="M1240 345l100-20-5 215-40-40z" fill="#3a6335"/>
                            <path d="M1345 310l62 80v145l-75 10z" fill="#546f35"/>
                            <path d="M1350 555l57-15v80h-65zM1360 625l47-5v60h-50z" fill="#326027"/>
                            <path d="M1305 620h50v60h50v45h-110z" fill="#7d6657"/>
                            <path d="M740 600l75-30 45 110-65 60z" fill="#a29a7c"/>
                            <path d="M815 555l80-25 25 60-75 30z" fill="#537148"/>
                            <!-- east fields -->
                            <path d="M845 745l155-130 50 70-100 110-60 15z" fill="#3f6736"/>
                            <path d="M1000 755l250-170 50 35-200 170z" fill="#3b6f35"/>
                            <path d="M1130 770l160-130-5 110-120 85z" fill="#999a80"/>
                            <path d="M895 820l105-60 40 85-95 45z" fill="#46593a"/><path d="M895 820l105-60 40 85-95 45z" fill="url(#dark)"/>
                            <path d="M1035 840l100-60 35 70-100 60z" fill="#979b7c"/>
                            <path d="M945 895l85-45 50 70-90 50z" fill="#7d6d5b"/><path d="M945 895l85-45 50 70-90 50z" fill="url(#light)"/>
                            <path d="M1000 980l85-60 60 70-80 75z" fill="#2a5c32"/>
                            <path d="M1085 915l90-55 40 65-75 70z" fill="#52754a"/>
                            <path d="M1170 845l115-90-20 110-55 45z" fill="#4d7443"/>
                            <path d="M1070 1075l135-110-20 110-70 95z" fill="#356b34"/>
                            <path d="M1290 725h117v430l-205-165 55-105z" fill="#808574"/>
                            <path d="M1220 930l60-45 20 60-60 40z" fill="#66723a"/>
                            <path d="M1205 1005l200 65-60 60-150-55z" fill="#35643d"/>
                            <path d="M1170 1075l155 90-20 45-145-50z" fill="#877268"/><path d="M1170 1075l155 90-20 45-145-50z" fill="url(#light)"/>
                            <path d="M1310 1075l75 55-50 30-70-50zM1190 1180l30-30 75 50-45 40z" fill="#a6a78d"/>
                            <path d="M1120 1190l60 30 70 130-60-50z" fill="#707c4a"/>
                            <path d="M1250 1250l60-10 80 173h-40z" fill="#2d6b31"/>
                            <path d="M1300 1210l107-70v130l-90-20z" fill="#51783b"/>
                            <path d="M1205 1290l45-35 45 70-45 40z" fill="#b0a98d"/>
                            <path d="M1245 1360l50-30 50 83h-70z" fill="#7c5c4b"/>
                            <path d="M1350 1290l57-30v120z" fill="#7c6b6e"/><path d="M1350 1290l57-30v120z" fill="url(#light)"/>
                            <!-- haze, then water on top of it -->
                            <path d="M45 51h1362v1362H45z" fill="#e6e6dc" opacity=".13"/>
                            <path d="M112 51h210l-5 45-65 55-65 25z" fill="#37431c"/>
                            <path d="M490 530l90 75 60 90-5 40-110 35-150 90" fill="none" stroke="#b4b8b6" stroke-width="16" stroke-dasharray="4 5"/>
                            <path d="M485 545l60 45 75 110c5 30-30 35-60 40-80 8-110 45-195 95l-115-130 30-35 70-50z" fill="url(#pond)"/>
                            <path d="M290 1115l120-85" stroke="#a9aca4" stroke-width="12" stroke-dasharray="4 3"/>
                            <path d="M355 938l30 7 22 30 2 42-14 23-92 72-28 4-30-41-10-45 14-22 88-66z" fill="#080405"/>
                            <!-- roads -->
                            <g fill="none" stroke="#d8d8c4" stroke-width="5">
                                <path d="M45 1078c60-5 110-25 160-55l155-110 170-120 290-35M365 905l60 10 15 0M820 765l35-20M45 845l60 22 190 60"/>
                                <path d="M845 745l150-140 30-20" stroke="#fff" stroke-width="7"/>
                                <path d="M830 765l70 95-380 250-110-160-30-35" stroke-width="5"/>
                                <path d="M1407 145l-190 195-190 240" stroke="#aaaf91"/>
                                <path d="M1340 225l5 210-15 110-35 100-15 200-65 90-20 100-80 140" stroke="#a7ae90"/>
                                <path d="M1225 340l75 165 25 45 80-15M1205 990l100 40 100 45" stroke="#b2b59a" stroke-width="3"/>
                                <path d="M200 225l140 105 60 70 90 110" stroke="#8c9968"/>
                                <path d="M230 1020l50 230 110 160M405 1195l130 200M615 1070l120 175 90 150M810 920l125 190 110 160M900 870l220 310 150 220" stroke="#8d9f77" stroke-width="4"/>
                                <path d="M730 1240l200-130 105-60M630 1310l100-65" stroke="#98937a" stroke-width="3"/>
                                <path d="M500 80l290 660M830 51l160 340 30 120" stroke="#99a07f" stroke-width="2"/>
                                <path d="M485 545l-235 165 105 145M105 51l90 165" stroke="#c9cbb8" stroke-width="3"/>
                                <path d="M1115 1180l-140 233M1050 1280l-150 133" stroke="#71805c" stroke-width="10"/>
                            </g>
                            <!-- village -->
                            <path d="M1303 775h16v48h-16zM1338 808h22v24h-22zM1365 795h14v24h-14zM1285 850h70v20h-70zM1380 850h25v60h-20zM1255 1000l70-50 12 18-75 45zM1360 985l28-18 12 14-30 20zM1290 955l25-10 6 14-25 15zM812 745l20-5 8 22-25 6zM430 910h14v16h-14zM1010 580l25-5-2 24-12-6zM1320 595h18v16h-18z" fill="#f4f5f4"/>
                            <path d="M1000 755l50 62M1018 748l45 65" stroke="#e5e5e0" stroke-width="6"/>
                            <path d="M195 180l70-30v50l-60 15z" fill="#a3a9ac"/>
                            <path d="M205 190v20M215 185v25M225 180v25M235 175v25M247 170v26" stroke="#6b757c" stroke-width="4"/>
                            <path d="M45 51h1362v1362H45z" filter="url(#grain)" opacity=".35"/>
                        </svg>
                        <div class="callout">220316.544899307599, 720063.746400694945</div>
                        <svg class="leader" width="134" height="26" viewBox="0 0 134 26"><path d="M1 1l132 24L88 1" fill="#fff" stroke="#0b7ac4" stroke-width="1.500"/><path d="M3 0h83" stroke="#fff" stroke-width="3"/></svg>
                        <div class="goto-xy">
                            <button aria-label="Collapse"><svg width="12" height="8"><use href="#chev"/></svg></button>
                            <label>X:<input type="text" value="220316.544899307599"></label>
                            <label>Y:<input type="text" value="720063.746400694945"></label>
                        </div>
                    </div>
                    <footer class="view-status">
                        <label class="scale"><select aria-label="Scale"><option>1:20,797</option></select><svg width="6" height="5"><use href="#caret"/></svg></label>
                        <span class="vbar"></span>
                        <button class="on" aria-label="Snapping"><svg width="20" height="22" viewBox="0 0 20 22" fill="none" stroke="#887f7a" stroke-width="1.300"><path d="M1 1h13v15H1zM1 8h13M7 1v15"/><path d="M10 17h10M15 12v10" stroke="#555"/></svg></button>
                        <button aria-label="Dynamic constraints"><svg width="20" height="20" viewBox="0 0 20 20"><path d="M9 9l9 9H4z" fill="#d5ecf8"/><path d="M1.500 3.500h5v4h-5zM13.500 11.500h5v4h-5z" fill="#fff" stroke="#555" stroke-width="1.500"/><path d="M16 1v6M13 4h6" stroke="#555" stroke-width="1.500"/><path d="M3 15l6-6 5-4M9 3l3 5" fill="none" stroke="#3f8fc2" stroke-width="1.500" stroke-dasharray="3 1"/><path d="M5 19h14" stroke="#4fa3db" stroke-width="1.500"/><path d="M1 17h3v3H1z" fill="#3d8a4c"/></svg></button>
                        <button aria-label="Grid"><svg width="16" height="16" viewBox="0 0 16 16"><path d="M.5.5h15v15H.5zM4.500 0v16M8.500 0v16M12.500 0v16M0 4.500h16M0 8.500h16M0 12.500h16" fill="none" stroke="#999"/></svg></button>
                        <button aria-label="Inference"><svg width="20" height="20" viewBox="0 0 20 20"><path d="M0 0h10v10H0z" fill="#daf0d8"/><path d="M10 0v20M0 10h20" stroke="#555" stroke-dasharray="2 2"/><path d="M8 8h4v4H8z" fill="#555"/></svg></button>
                        <button aria-label="Corrections"><svg width="20" height="20" viewBox="0 0 20 20"><path d="M1 14V5l6 9V5" fill="none" stroke="#3f8fc2" stroke-width="2.500"/><path d="M10 0v20M11 19l8-10" stroke="#666"/><path d="M12 3c5 0 5 3 5 7M14 8l3 3 3-4" fill="none" stroke="#3f8fc2" stroke-width="1.500"/></svg></button>
                        <span class="vbar"></span>
                        <output>221,009.46E</output>
                    </footer>
                </div>
            </div>
        </section>

        <!-- pen marks -->
        <svg class="ink" width="1200" height="850" viewBox="0 0 1200 850">
            <path d="M488 236l-3 14-3 25M478 278l20-8 30-16 18-5h8M478 278l26 6 28 3"/>
            <path d="M488 236l-1 5" stroke-width="7"/>
            <path d="M440 756l-43 1-17 3-47-1-35-5h-35l-18 7-20-1q-5 1-4 18 0 12 5 20 5 5 18 6h39l25-5h33l33 2 40 7h29l9-2v-23l-3-16-6-5 8 2"/>
            <path d="M455 779h45l17-3 60-2 43-3 20-5 17-2 43-12q50-10 82-28 12-6 64-64l74-66 22-16 28-21 30-27 23-28 47-56 10-13 34-46 33-46"/>
            <path d="M1147 345q-12 14-36 20l-34 13M1147 345l-7 22-3 34"/>
        </svg>
    </main>
    <script>
        // keep the last coordinate selected, as in the editor
        const note = document.getElementById('note-text');
        note.focus();
        note.setSelectionRange(note.value.lastIndexOf('\n') + 1, note.value.length);
    </script>
</body>
</html>
```
FILE: styles.css
```
* {
    box-sizing: border-box;
}
body, html {
    height: 100%;
    margin: 0;
    overflow: hidden;
    font-family: "Open Sans", "Noto Sans", sans-serif;
    font-size: 14px;
    line-height: 18px;
    color: #222;
}
h1, h2, h3, p, ul {
    margin: 0;
    padding: 0;
    font-weight: normal;
}
ul {
    list-style: none;
}
button {
    margin: 0;
    padding: 0;
    border: none;
    background: none;
    font: inherit;
    color: inherit;
}
input, select, textarea {
    font: inherit;
    color: inherit;
}
a {
    color: inherit;
    text-decoration: none;
}
svg {
    flex: none;
}
.defs {
    position: absolute;
}
.desktop {
    position: relative;
    height: 100%;
    background-color: #f3f3f3;
}
.behind {
    position: absolute;
    left: 1px;
    top: 972px;
}
.min {
    width: 12px;
    height: 1px;
    background-color: #777;
}
.car {
    color: #333;
}
.group {
    display: flex;
    flex-direction: column;
    flex: none;
}
.group h2 {
    text-align: center;
    font-size: 13px;
    color: #555;
}
.tools {
    display: flex;
    flex: 1;
}
.big {
    display: flex;
    flex-direction: column;
    align-items: center;
    flex: none;
}
.dim {
    color: #8a8a8a;
}

/* explorer */
.explorer {
    position: absolute;
    top: 0;
    bottom: 2px;
    left: 7px;
    width: 781px;
    display: flex;
    flex-direction: column;
    background-color: #fff;
    border: 1px solid #a5a5a5;
    border-top: none;
    box-shadow: 0 0 8px rgba(0, 0, 0, 0.2);
}
.ex-title {
    display: flex;
    align-items: center;
    height: 37px;
    padding-left: 10px;
    gap: 11px;
    color: #999;
}
.ex-title h1, .np-title h1 {
    font-size: 14px;
    color: #999;
}
.ex-title .bar {
    width: 1px;
    height: 16px;
    background-color: #888;
    margin-right: 3px;
}
.ex-title .bar + h1 {
    margin-left: -8px;
}
.ex-title .min {
    margin-left: auto;
    margin-right: 141px;
}
.ex-tabs {
    display: flex;
    height: 28px;
    font-size: 13px;
    color: #333;
}
.ex-tabs button {
    padding: 0 17px;
}
.ex-tabs .file {
    width: 70px;
    background-color: #0063b1;
    color: #fff;
}
.ex-tabs .active {
    width: 69px;
    background-color: #f3f6f8;
    border: 1px solid #dadbdc;
    border-bottom: none;
}
.ex-ribbon {
    display: flex;
    height: 114px;
    background-color: #f3f6f8;
    border-top: 1px solid #e2e4e6;
    border-bottom: 1px solid #d8dadc;
    font-size: 13px;
    line-height: 17px;
    overflow: hidden;
}
.ex-ribbon .group {
    border-right: 1px solid #dcdfe2;
    margin: 3px 0 4px;
    padding: 6px 4px 0;
}
.ex-ribbon .group h2 {
    line-height: 14px;
}
.ex-ribbon .big svg:first-child {
    margin-bottom: 6px;
}
.ex-ribbon .big .car {
    margin-top: 4px;
}
.g-clip {
    width: 215px;
}
.g-clip .pin {
    width: 79px;
    margin-left: -1px;
}
.g-clip .copy {
    width: 46px;
}
.g-clip .paste {
    width: 54px;
}
.stack {
    display: flex;
    flex-direction: column;
    gap: 8px;
    width: 24px;
}
.stack button {
    display: flex;
    align-items: center;
    justify-content: center;
    gap: 4px;
    height: 18px;
}
.stack.wide {
    width: 32px;
}
.stack.wide button {
    justify-content: flex-start;
}
.stack.lines {
    width: 150px;
}
.stack.lines button {
    justify-content: flex-start;
}
.g-org {
    width: 189px;
}
.rows {
    display: flex;
    flex-direction: column;
}
.rows button {
    display: flex;
    align-items: center;
    gap: 5px;
    white-space: nowrap;
}
.g-org .rows {
    width: 92px;
    padding: 0 0 0 5px;
    margin: 8px 0 16px;
    gap: 16px;
}
.g-org .rows button {
    height: 20px;
}
.g-org .split {
    border-left: 1px solid #dcdfe2;
    padding-left: 9px;
}
.g-new {
    width: 97px;
}
.g-new .big {
    width: 48px;
    margin-right: 5px;
}
.g-open {
    width: 115px;
}
.g-open .big {
    width: 66px;
    margin-right: 3px;
}
.g-sel {
    flex: 1;
}
.g-sel .tools {
    padding-left: 4px;
}
.g-sel h2 {
    padding-right: 40px;
}
.ex-nav {
    display: flex;
    align-items: center;
    height: 49px;
    padding-left: 16px;
    color: #666;
}
.ex-nav > button {
    display: flex;
    width: 38px;
}
.ex-nav > .recent {
    width: 25px;
    margin-left: -4px;
}
.ex-nav > .up {
    width: 21px;
}
.address {
    display: flex;
    align-items: center;
    gap: 10px;
    width: 310px;
    height: 38px;
    padding-left: 5px;
    border: 1px solid #d4d4d4;
    color: #222;
}
.address .sep {
    color: #555;
}
.address .drop {
    margin-left: auto;
    margin-right: 2px;
    color: #666;
}
.address .refresh {
    display: flex;
    align-items: center;
    justify-content: center;
    width: 40px;
    height: 36px;
    border-left: 1px solid #d4d4d4;
}
.ex-search {
    display: flex;
    align-items: center;
    flex: 1;
    height: 38px;
    margin-left: 12px;
    padding-left: 17px;
    gap: 15px;
    border: 1px solid #d4d4d4;
}
.ex-search input {
    flex: 1;
    border: none;
    background: none;
    outline: none;
}
.ex-search input::placeholder {
    color: #777;
}
.ex-body {
    display: flex;
    flex: 1;
    padding-top: 4px;
}
.sidebar {
    width: 228px;
    padding-top: 19px;
}
.sidebar li {
    margin-right: 2px;
    padding-left: 39px;
}
.sidebar a {
    display: flex;
    align-items: center;
    gap: 6px;
    height: 30px;
}
.sidebar .top {
    padding-left: 29px;
    margin-top: 10px;
}
.sidebar .top:first-child {
    margin-top: 0;
}
.sidebar .selected {
    background-color: #d9d9d9;
}
.files {
    display: flex;
    flex-direction: column;
    flex: 1;
    border-left: 1px solid #f0f0f0;
}
.files table {
    width: 422px;
    margin-left: 20px;
    border-collapse: collapse;
    table-layout: fixed;
}
.files th {
    padding: 0 0 9px;
    font-weight: normal;
    text-align: left;
    color: #4c607a;
}
.files th div {
    position: relative;
    height: 30px;
    padding-left: 3px;
    line-height: 29px;
}
.files .sort {
    position: absolute;
    top: -2px;
    left: 153px;
}
.files .name {
    width: 321px;
}
.files .size div {
    padding-left: 8px;
    border-left: 1px solid #e2e2e2;
}
.files td {
    height: 27px;
    padding: 0 0 0 5px;
}
.files td svg {
    vertical-align: middle;
    margin: -4px 5px 0 0;
}
.files td:last-child {
    text-align: right;
    padding-right: 10px;
    color: #777;
}
.files .selected {
    background-color: #d9d9d9;
}
.hscroll {
    display: flex;
    align-items: center;
    height: 20px;
    margin-top: auto;
    margin-left: 2px;
    background-color: #f0f0f0;
}
.hscroll button {
    width: 21px;
    height: 18px;
}
.hscroll .thumb {
    width: 354px;
    height: 19px;
    background-color: #cdcdcd;
}
.ex-status {
    display: flex;
    align-items: center;
    height: 29px;
    padding-left: 17px;
    color: #2a4260;
}
.ex-status span {
    margin-right: 9px;
}
.ex-status span:first-child {
    margin-right: 12px;
    padding-right: 12px;
    border-right: 1px solid #eee;
}
.view-toggle {
    width: 28px;
    height: 26px;
    margin-left: auto;
    margin-right: 32px;
    background-color: #c3dcec;
    border: 1px solid #3d8fb8;
}

/* notepad */
.notepad {
    position: absolute;
    left: 226px;
    top: 605px;
    width: 560px;
    display: flex;
    flex-direction: column;
    background-color: #fff;
    border: 1px solid #8f8f8f;
    box-shadow: 0 2px 14px rgba(0, 0, 0, 0.35);
}
.np-title {
    display: flex;
    align-items: center;
    height: 38px;
    padding-left: 10px;
    gap: 4px;
}
.np-title .min {
    margin-left: auto;
}
.np-title .max {
    width: 12px;
    height: 12px;
    margin: 0 106px 0 42px;
    border: 1px solid #777;
}
.np-menu {
    display: flex;
    height: 24px;
    padding-left: 7px;
    gap: 15px;
    border-bottom: 2px solid #f0f0f0;
    color: #777;
}
.notepad textarea {
    height: 206px;
    padding: 2px 5px;
    border: none;
    outline: none;
    resize: none;
    overflow: hidden;
    font-family: "DejaVu Sans Mono", "Liberation Mono", monospace;
    font-size: 17px;
    line-height: 22px;
    color: #111;
}
.notepad textarea::selection {
    background-color: #0078d7;
    color: #fff;
}
.np-scroll {
    display: flex;
    align-items: center;
    height: 20px;
    padding-left: 6px;
    background-color: #f0f0f0;
}
.np-status {
    display: flex;
    height: 30px;
    background-color: #f0f0f0;
    border-top: 1px solid #d7d7d7;
    line-height: 30px;
}
.np-status span {
    padding-left: 8px;
}
.np-status .pos, .np-status .zoom, .np-status .eol {
    border-right: 1px solid #d7d7d7;
}
.np-status .pos {
    width: 172px;
    padding-left: 10px;
}
.np-status .zoom {
    width: 63px;
}
.np-status .eol {
    width: 150px;
}

/* arcgis pro */
.pro {
    position: absolute;
    left: 678px;
    right: -60px;
    top: 0;
    bottom: 9px;
    display: flex;
    flex-direction: column;
    background-color: #f0f0f0;
    border: 1px solid #1979ca;
    border-top-width: 2px;
    box-shadow: 0 0 14px rgba(0, 0, 0, 0.35);
    color: #555;
}
.pro-head {
    display: flex;
    height: 74px;
    flex: none;
    background-color: #f1f1f1;
    border-bottom: 1px solid #c2c2c7;
}
.pro-left {
    width: 659px;
}
.pro-title {
    display: flex;
    align-items: center;
    height: 42px;
    padding-left: 14px;
}
.pro-title .open, .pro-title .save {
    margin-left: 15px;
}
.pro-title .undo {
    margin: 0 8px 0 13px;
    color: #4d9dd6;
}
.pro-title .redo {
    margin: 0 9px 0 8px;
    color: #b5d3e8;
    transform: scaleX(-1);
}
.pro-title .save {
    margin-left: 13px;
}
.pro-title .more {
    margin: 0 64px 0 20px;
}
.pro-title .more + h1 {
    margin-left: 79px;
}
.pro-title h1 {
    font-size: 14px;
    line-height: 38px;
    height: 42px;
    color: #666;
}
.pro-tabs {
    display: flex;
    height: 31px;
    font-size: 15px;
    color: #666;
}
.pro-tabs button {
    padding: 2px 19px 0;
}
.pro-tabs .project {
    width: 98px;
    margin-right: 6px;
    background-color: #0078d0;
    color: #fff;
}
.pro-tabs .active {
    width: 65px;
    margin-right: 3px;
    margin-bottom: -1px;
    padding: 0;
    background-color: #f7f7f7;
    border: 1px solid #c2c2c7;
    border-bottom: none;
    color: #0f6fc0;
}
.context {
    display: flex;
    flex-direction: column;
    align-items: center;
    font-size: 14px;
    color: #666;
}
.context span {
    flex: 1;
    padding-top: 7px;
}
.context button {
    height: 31px;
    padding-top: 2px;
    font-size: 15px;
}
.context.purple {
    width: 95px;
    margin-right: 5px;
    background-color: #e4e2ec;
    border-top: 5px solid #9181be;
}
.context.orange {
    width: 116px;
    background-color: #f2e9e0;
    border-top: 5px solid #f2a65c;
}
.pro-ribbon {
    display: flex;
    flex: none;
    height: 114px;
    background-color: #f7f7f7;
    border-bottom: 1px solid #c2c2c7;
}
.pro-ribbon .group {
    margin: 3px 0 5px;
    border-right: 1px solid #d3d3d6;
}
.pro-ribbon .group h2 {
    height: 19px;
    line-height: 26px;
}
.pro-ribbon .big {
    height: 85px;
    padding-top: 4px;
}
.pro-ribbon .big svg:first-child {
    margin-bottom: 4px;
}
.pro-ribbon .car {
    margin-top: 6px;
    color: #555;
}
.pro-ribbon .rows {
    padding-top: 6px;
    gap: 7px;
}
.pro-ribbon .on {
    background-color: #bad3e6;
}
.pro-ribbon .rows button {
    height: 20px;
}
.pro-ribbon .rows .car {
    margin-top: 0;
}
.p-clip {
    width: 158px;
    padding-left: 5px;
}
.p-clip .big {
    width: 44px;
    margin-right: 6px;
}
.p-clip h2 {
    padding-right: 8px;
}
.p-nav {
    width: 253px;
    padding-left: 5px;
}
.explore {
    width: 57px;
}
.nav-grid {
    display: grid;
    grid-template-columns: 20px 20px;
    gap: 7px 8px;
    align-content: start;
    margin: 6px 4px 0;
}
.nav-grid button {
    height: 20px;
    line-height: 0;
}
.books {
    width: 82px;
}
.goto {
    width: 47px;
}
.p-nav h2 {
    position: relative;
    padding-right: 26px;
}
.launcher {
    position: absolute;
    right: 6px;
    top: 8px;
}
.p-layer {
    width: 294px;
    padding-left: 8px;
}
.p-layer h2 {
    padding-right: 8px;
}
.base {
    width: 66px;
}
.data {
    display: block;
    width: 53px;
    margin-right: 2px;
}
.data .side {
    margin: 0 0 2px 4px;
}
.p-sel {
    width: 320px;
    padding-left: 5px;
}
.p-sel h2 {
    padding-right: 48px;
}
.sel {
    width: 48px;
}
.attr {
    width: 73px;
}
.loc {
    width: 66px;
    margin-right: 5px;
}
.pro-body {
    display: flex;
    flex: 1;
    padding: 8px 0 8px 8px;
    gap: 7px;
}
.contents {
    width: 264px;
    background-color: #f7f7f7;
    border: 1px solid #d2d2d6;
    border-top: 5px solid #cacaca;
}
.contents header {
    display: flex;
    align-items: center;
    height: 26px;
    padding: 0 7px 0 6px;
    gap: 10px;
}
.contents header h2 {
    flex: 1;
    font-size: 19px;
    line-height: 28px;
    padding-top: 5px;
    color: #666;
}
.contents header button {
    line-height: 0;
}
.find {
    display: flex;
    align-items: center;
    gap: 9px;
    height: 30px;
    margin: 18px 4px 0;
}
.find label {
    display: flex;
    align-items: center;
    flex: 1;
    gap: 11px;
    height: 30px;
    padding: 0 8px 0 7px;
    background-color: #fff;
    border: 1px solid #999;
}
.find input {
    flex: 1;
    width: 0;
    padding: 0;
    border: none;
    outline: none;
    font-style: italic;
}
.find input::placeholder {
    color: #555;
}
.faint {
    color: #bbb;
}
.list-by {
    display: flex;
    margin: 8px 0 0 19px;
}
.list-by button {
    width: 40px;
    height: 45px;
    padding-bottom: 4px;
    border-bottom: 2px solid #cfcfcf;
}
.list-by .active {
    padding-bottom: 2px;
    border-bottom: 4px solid #0078c8;
}
.list-by .cut {
    width: 26px;
    text-align: right;
}
.dots {
    display: flex;
    gap: 4px;
    padding: 21px 0 0 16px;
}
.dots i {
    width: 4px;
    height: 4px;
    background-color: #333;
}
.contents h3 {
    margin: 15px 0 0 19px;
    font-size: 17px;
    line-height: 24px;
    font-weight: 600;
    color: #484848;
}
.tree {
    padding-top: 7px;
}
.tree li {
    display: flex;
    align-items: center;
    height: 30px;
}
.tree .root {
    padding-left: 2px;
    gap: 6px;
}
.tree label {
    display: flex;
    align-items: center;
    gap: 6px;
}
.tree .sub {
    margin: 0 1px 0 17px;
    padding-left: 13px;
}
.tree .sub .tri {
    margin: 0 6px 0 -13px;
}
.tree .sub.selected {
    margin-left: 29px;
    padding-left: 1px;
    background-color: #c4daec;
    border: 1px solid #1979ca;
}
.tree .sub:not(.selected) label {
    margin-left: -1px;
}
.tree input {
    appearance: none;
    width: 18px;
    height: 18px;
    margin: 0;
    background-color: #fff;
    border: 1px solid #777;
    display: grid;
    place-items: center;
}
.tree input:checked::after {
    content: "";
    width: 5px;
    height: 10px;
    margin-top: -2px;
    border: solid #555;
    border-width: 0 2px 2px 0;
    transform: rotate(40deg);
}
.tree .rgb {
    height: 26px;
    margin-bottom: 2px;
    padding-left: 35px;
}
.tree .band {
    height: 24px;
    padding-left: 38px;
    gap: 9px;
}
.band i {
    width: 21px;
    height: 16px;
}
.red {
    background-color: #f00;
}
.green {
    background-color: #0f0;
}
.blue {
    background-color: #00f;
}
.view {
    display: flex;
    flex-direction: column;
    flex: 1;
    margin-left: 1px;
    border: 1px solid #d8d8dc;
    border-top: none;
}
.view-tabs {
    height: 28px;
    border-bottom: 3px solid #0078c8;
}
.view-tabs button {
    display: flex;
    align-items: center;
    gap: 5px;
    height: 28px;
    padding: 0 8px;
    background-color: #0078d0;
    color: #fff;
    font-size: 15px;
}
.view-tabs button svg:last-child {
    margin-left: 5px;
}
.canvas {
    position: relative;
    flex: 1;
    overflow: hidden;
    background-color: #fff;
}
.raster {
    position: absolute;
    left: 195px;
    top: 111px;
    width: 454px;
    height: 454px;
}
.callout {
    position: absolute;
    left: 17px;
    top: 59px;
    height: 29px;
    padding: 0 3px;
    border: 2px solid #0b7ac4;
    border-radius: 5px;
    background-color: #fff;
    font-size: 16px;
    line-height: 26px;
    color: #111;
    white-space: nowrap;
}
.leader {
    position: absolute;
    left: 62px;
    top: 86px;
}
.goto-xy {
    position: absolute;
    right: 0;
    bottom: 22px;
    left: 518px;
    display: flex;
    align-items: center;
    gap: 7px;
    height: 33px;
    padding: 0 0 2px 17px;
    background-color: #f7f7f7;
    border: 1px solid #c6c6c6;
    white-space: nowrap;
}
.goto-xy button {
    position: absolute;
    left: -12px;
    top: -13px;
    width: 24px;
    height: 24px;
    line-height: 0;
    border-bottom: 1px solid #c6c6c6;
    border-radius: 50%;
    background-color: #f7f7f7;
}
.goto-xy label {
    display: flex;
    align-items: center;
    gap: 6px;
}
.goto-xy input {
    width: 99px;
    height: 27px;
    padding: 0 2px;
    border: 1px solid #aaa;
    background-color: #fff;
    direction: rtl;
}
.view-status {
    display: flex;
    align-items: center;
    height: 29px;
    padding-left: 7px;
    background-color: #f7f7f7;
}
.scale {
    position: relative;
}
.scale select {
    appearance: none;
    width: 125px;
    height: 28px;
    padding: 0 6px;
    border: 1px solid #aaa;
    border-radius: 0;
    background-color: #fff;
}
.scale svg {
    position: absolute;
    right: 5px;
    top: 12px;
}
.vbar {
    width: 2px;
    height: 20px;
    margin: 0 5px 0 4px;
    background-color: #ccc;
}
.view-status button {
    display: flex;
    align-items: center;
    justify-content: center;
    width: 28px;
    height: 26px;
}
.view-status button.on {
    width: 26px;
    margin-right: 1px;
    background-color: #a1d3f2;
}
.view-status output {
    margin-left: auto;
    margin-right: 3px;
}

.ink {
    position: absolute;
    left: 0;
    top: 0;
    pointer-events: none;
    fill: none;
    stroke: #ff8a1f;
    stroke-width: 4;
    stroke-linecap: round;
    stroke-linejoin: round;
}
```
